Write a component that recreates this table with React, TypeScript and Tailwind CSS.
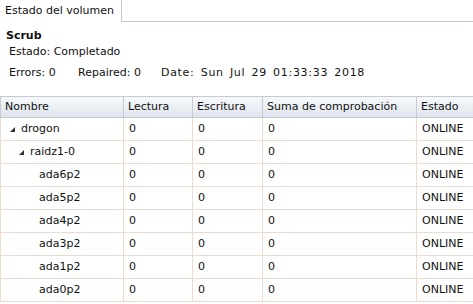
import React from "react";

type Row = { name: string; level: number; expander: boolean };

const rows: Row[] = [
  { name: "drogon", level: 0, expander: true },
  { name: "raidz1-0", level: 1, expander: true },
  { name: "ada6p2", level: 2, expander: false },
  { name: "ada5p2", level: 2, expander: false },
  { name: "ada4p2", level: 2, expander: false },
  { name: "ada3p2", level: 2, expander: false },
  { name: "ada1p2", level: 2, expander: false },
  { name: "ada0p2", level: 2, expander: false },
];

function Expander() {
  return (
    <svg width="5" height="5" viewBox="0 0 5 5" className="mr-[6px] shrink-0">
      <polygon points="5,0 5,5 0,5" fill="#333" />
    </svg>
  );
}

export default function App() {
  return (
    <div
      className="w-[473px] h-[304px] overflow-hidden bg-white text-[11px] text-[#111]"
      style={{ fontFamily: '"DejaVu Sans", Verdana, sans-serif' }}
    >
      {/* onglets */}
      <div className="flex h-[22px]">
        <div className="w-[122px] h-[22px] border-r border-[#c4c9cf] pl-[5px] pt-[3px] bg-white">
          Estado del volumen
        </div>
        <div className="flex-1 border-b border-[#c4c9cf]" />
      </div>

      {/* info scrub */}
      <div className="pl-[6px] pt-[7px] h-[74px]">
        <div className="font-bold leading-[13px]">Scrub</div>
        <div className="pl-[3px] mt-[3px] leading-[13px]">Estado: Completado</div>
        <div className="pl-[3px] mt-[8px] leading-[13px] flex">
          <span className="w-[69px]">Errors: 0</span>
          <span className="w-[83px]">Repaired: 0</span>
          <span className="[word-spacing:2px] tracking-[0.7px]">Date: Sun Jul 29 01:33:33 2018</span>
        </div>
      </div>

      {/* tableau */}
      <table className="border-collapse table-fixed w-[480px]">
        <colgroup>
          <col className="w-[123px]" />
          <col className="w-[69px]" />
          <col className="w-[70px]" />
          <col className="w-[154px]" />
          <col />
        </colgroup>
        <thead>
          <tr className="h-[21px] bg-gradient-to-b from-[#f7f9fb] to-[#dde4ec]">
            {["Nombre", "Lectura", "Escritura", "Suma de comprobación", "Estado"].map((h) => (
              <th
                key={h}
                className="border border-[#c3cad2] font-normal text-left px-[4px] py-0 whitespace-nowrap"
              >
                {h}
              </th>
            ))}
          </tr>
        </thead>
        <tbody>
          {rows.map((r) => (
            <tr key={r.name} className="h-[23px]">
              <td className="border border-[#eddccd] py-0 px-0">
                <div
                  className={
                    r.level === 0
                      ? "flex items-center pl-[9px]"
                      : r.level === 1
                      ? "flex items-center pl-[18px]"
                      : "flex items-center pl-[38px]"
                  }
                >
                  {r.expander && <Expander />}
                  {r.name}
                </div>
              </td>
              <td className="border border-[#eddccd] py-0 px-[5px]">0</td>
              <td className="border border-[#eddccd] py-0 px-[5px]">0</td>
              <td className="border border-[#eddccd] py-0 px-[5px]">0</td>
              <td className="border border-[#eddccd] py-0 px-[5px]">ONLINE</td>
            </tr>
          ))}
        </tbody>
      </table>
    </div>
  );
}
